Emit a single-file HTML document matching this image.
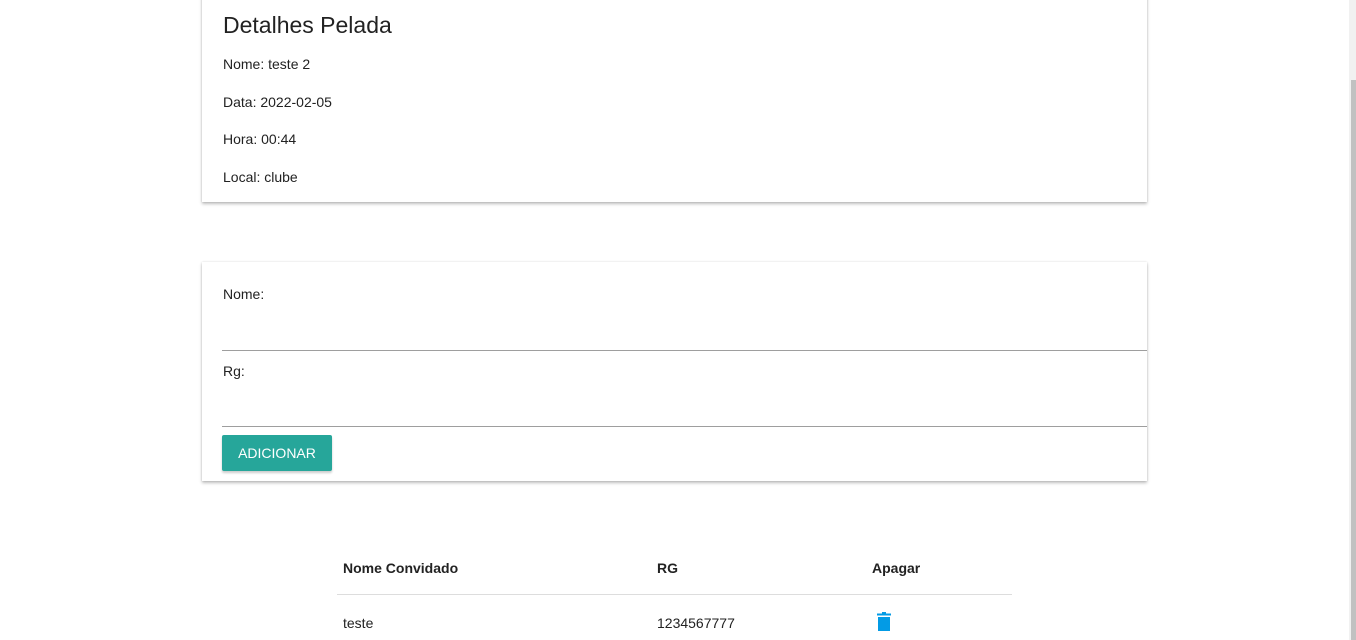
<!DOCTYPE html>
<html><head><style>
body{margin:0;width:1356px;height:640px;overflow:hidden;background:#fff;font-family:"Liberation Sans",sans-serif;color:#222;position:relative}
.card{position:absolute;left:202px;width:945px;background:#fff;box-shadow:0 2px 3px rgba(0,0,0,.25),0 0 2px rgba(0,0,0,.12)}
.t{position:absolute;left:21px;font-size:14px;white-space:nowrap}
.line{position:absolute;left:20px;right:0;height:1px;background:#9e9e9e}
.sb{position:absolute;left:1349px;top:0;width:7px;height:640px;background:#f1f1f1}
.th{position:absolute;left:1351px;top:80px;width:5px;height:560px;background:#c1c1c1}
</style></head><body>
<div class="card" style="top:-5px;height:207px">
 <div class="t" style="top:17px;font-size:23px">Detalhes Pelada</div>
 <div class="t" style="top:61px">Nome: teste 2</div>
 <div class="t" style="top:99px">Data: 2022-02-05</div>
 <div class="t" style="top:136px">Hora: 00:44</div>
 <div class="t" style="top:174px">Local: clube</div>
</div>
<div class="card" style="top:262px;height:219px">
 <div class="t" style="top:24px">Nome:</div>
 <div class="line" style="top:88px"></div>
 <div class="t" style="top:101px">Rg:</div>
 <div class="line" style="top:164px"></div>
 <div style="position:absolute;left:20px;top:173px;width:110px;height:36px;background:#26a69a;border-radius:2px;box-shadow:0 2px 2px rgba(0,0,0,.2);color:#fff;font-size:14px;line-height:36px;text-align:center">ADICIONAR</div>
</div>
<div class="t" style="left:343px;top:560px;font-weight:bold">Nome Convidado</div>
<div class="t" style="left:657px;top:560px;font-weight:bold">RG</div>
<div class="t" style="left:872px;top:560px;font-weight:bold">Apagar</div>
<div style="position:absolute;left:337px;top:594px;width:675px;height:1px;background:#ddd"></div>
<div class="t" style="left:343px;top:615px">teste</div>
<div class="t" style="left:657px;top:615px">1234567777</div>
<svg style="position:absolute;left:877px;top:612px" width="14" height="20" viewBox="0 0 14 20"><rect x="0" y="1.5" width="14" height="2" fill="#039be5"/><rect x="5" y="0" width="4" height="2" fill="#039be5"/><rect x="1" y="5" width="12" height="14" fill="#039be5"/></svg>
<div class="sb"></div><div class="th"></div>
</body></html>
